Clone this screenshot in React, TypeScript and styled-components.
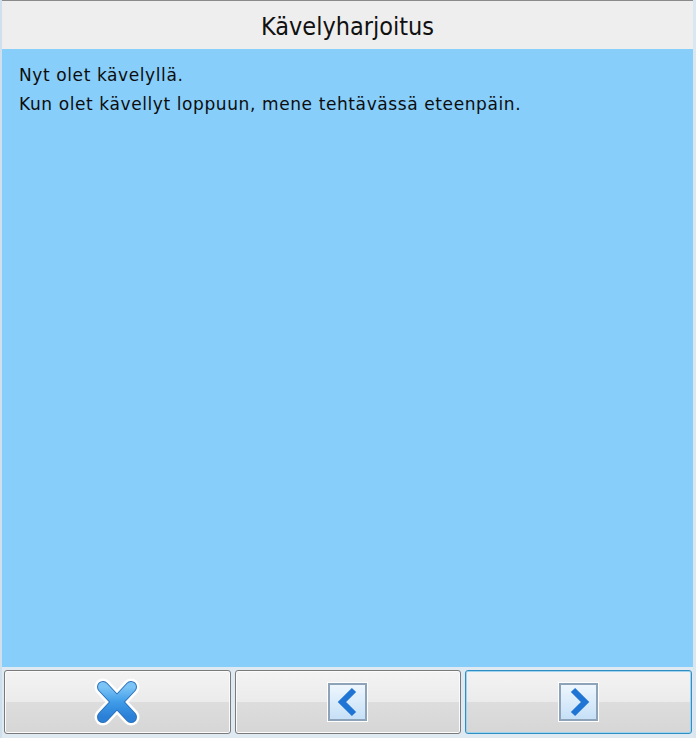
import React from "react";
import styled, { createGlobalStyle } from "styled-components";

const Global = createGlobalStyle`
  html, body { margin: 0; padding: 0; }
  body { width: 696px; height: 738px; overflow: hidden; background: #dfe9f2; }
  #root { height: 738px; }
`;

const Frame = styled.div`
  display: flex;
  flex-direction: column;
  width: 696px;
  height: 738px;
  box-sizing: border-box;
  border-left: 2px solid #cfe0ec;
  border-right: 3px solid #dbe7f0;
  font-family: "DejaVu Sans", Verdana, sans-serif;
`;

const Header = styled.header`
  height: 49px;
  box-sizing: border-box;
  border-top: 1px solid #8a8a8a;
  background: #eeeeee;
  display: flex;
  align-items: center;
  justify-content: center;
  padding-top: 2px;
  font-family: "DejaVu Sans", sans-serif;
  font-stretch: condensed;
  font-size: 25px;
  color: #111;
`;

const Content = styled.main`
  flex: 1;
  background: #87cefa;
  padding: 12px 17px;
  font-size: 17px;
  letter-spacing: 0.6px;
  color: #0d0d0d;
`;

const Line = styled.p`
  margin: 0;
  line-height: 29px;
`;

const Footer = styled.footer`
  height: 71px;
  box-sizing: border-box;
  padding: 3px 1px 4px 2px;
  display: grid;
  grid-template-columns: 1fr 1fr 1fr;
  gap: 4px;
  background: #dfe9f2;
`;

const Button = styled.button<{ $focused?: boolean }>`
  display: flex;
  align-items: center;
  justify-content: center;
  padding: 0;
  border: 1px solid ${(p) => (p.$focused ? "#2f8fc4" : "#7a7a7a")};
  border-radius: 3px;
  background: linear-gradient(
    to bottom,
    #f3f3f3 0%,
    #ebebeb 50%,
    #dddddd 50%,
    #d6d6d6 100%
  );
  box-shadow: inset 0 0 0 1px ${(p) => (p.$focused ? "#9fd3ee" : "#fbfbfb")};
  cursor: pointer;
`;

const ArrowBox = styled.div`
  width: 39px;
  height: 38px;
  box-sizing: border-box;
  border: 2px solid #8fa3b8;
  outline: 1px solid #ffffff;
  background: linear-gradient(to bottom, #eef6fd 0%, #c6e0f7 100%);
  display: flex;
  align-items: center;
  justify-content: center;
`;

const CloseIcon = () => (
  <svg width="48" height="50" viewBox="0 0 48 50">
    <defs>
      <linearGradient id="xg" x1="0" y1="0" x2="0" y2="1">
        <stop offset="0" stopColor="#7cc4f5" />
        <stop offset="0.5" stopColor="#3f9ce8" />
        <stop offset="1" stopColor="#2a7fd6" />
      </linearGradient>
    </defs>
    <g strokeLinecap="round">
      <line x1="10" y1="10" x2="38" y2="40" stroke="#ffffff" strokeWidth="17" />
      <line x1="38" y1="10" x2="10" y2="40" stroke="#ffffff" strokeWidth="17" />
      <line x1="10" y1="10" x2="38" y2="40" stroke="#2b6fb8" strokeWidth="12" />
      <line x1="38" y1="10" x2="10" y2="40" stroke="#2b6fb8" strokeWidth="12" />
      <line x1="10" y1="10" x2="38" y2="40" stroke="url(#xg)" strokeWidth="10" />
      <line x1="38" y1="10" x2="10" y2="40" stroke="url(#xg)" strokeWidth="10" />
    </g>
  </svg>
);

const Chevron = ({ dir }: { dir: "left" | "right" }) => (
  <svg width="24" height="30" viewBox="0 0 24 30">
    <polyline
      points={dir === "left" ? "18,3 6,15 18,27" : "6,3 18,15 6,27"}
      fill="none"
      stroke="#1f74d4"
      strokeWidth="6"
      strokeLinejoin="miter"
    />
  </svg>
);

export default function App() {
  return (
    <>
      <Global />
      <Frame>
        <Header>Kävelyharjoitus</Header>
        <Content>
          <Line>Nyt olet kävelyllä.</Line>
          <Line>Kun olet kävellyt loppuun, mene tehtävässä eteenpäin.</Line>
        </Content>
        <Footer>
          <Button aria-label="Sulje">
            <CloseIcon />
          </Button>
          <Button aria-label="Edellinen">
            <ArrowBox>
              <Chevron dir="left" />
            </ArrowBox>
          </Button>
          <Button aria-label="Seuraava" $focused>
            <ArrowBox>
              <Chevron dir="right" />
            </ArrowBox>
          </Button>
        </Footer>
      </Frame>
    </>
  );
}
